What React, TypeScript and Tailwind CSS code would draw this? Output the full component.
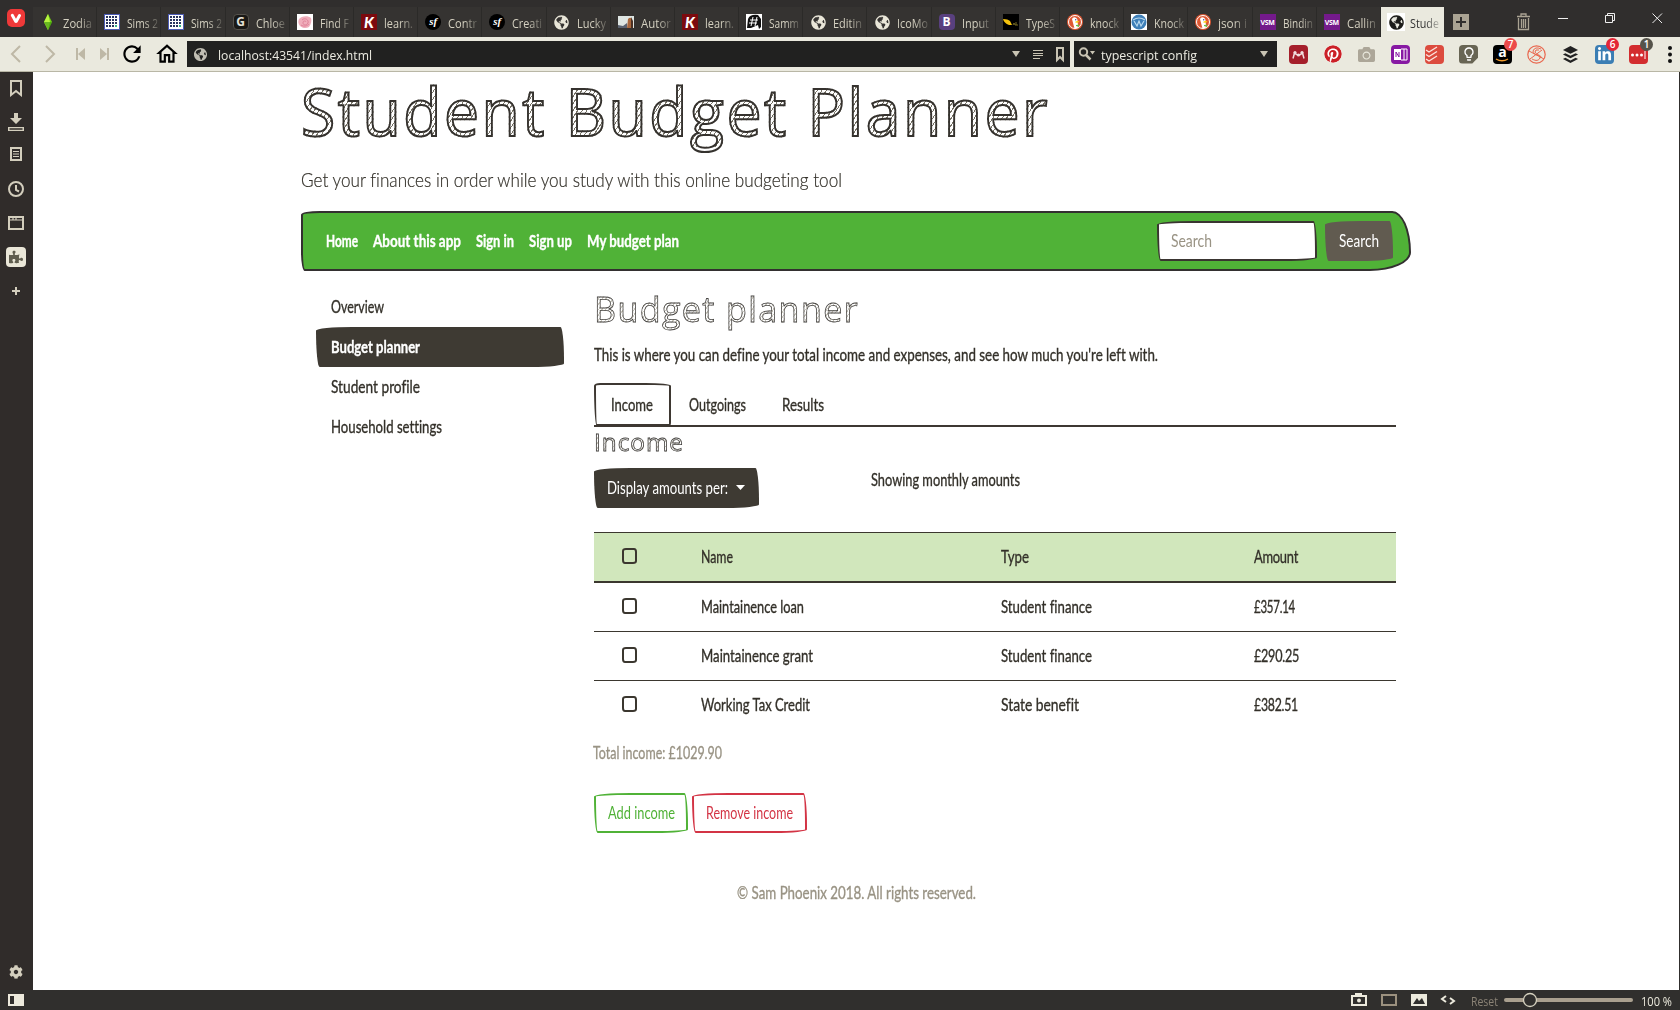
import React, { useLayoutEffect, useRef, useState } from 'react';
import {
  FaPinterest, FaAmazon, FaCamera, FaGlobeAmericas, FaPuzzlePiece, FaLinkedinIn, FaCog,
} from 'react-icons/fa';
import { MdRefresh, MdOutlineHome, MdLightbulbOutline } from 'react-icons/md';
import { SiBuffer } from 'react-icons/si';

/** A single line of text squeezed or stretched to a given width. */
function Fit({ w, className = '', children }: { w: number; className?: string; children: React.ReactNode }) {
  const ref = useRef<HTMLSpanElement>(null);
  const [scale, setScale] = useState(1);
  useLayoutEffect(() => {
    if (ref.current && ref.current.offsetWidth) setScale(w / ref.current.getBoundingClientRect().width);
  }, []);
  return (
    <span className="inline-block shrink-0 whitespace-nowrap text-left" style={{ width: w }}>
      <span ref={ref} className={'inline-block origin-left ' + className} style={{ transform: `scaleX(${scale})` }}>
        {children}
      </span>
    </span>
  );
}

const BODY = 'font-["Lato",sans-serif] text-[17px] leading-[26px] [font-variant-ligatures:none] [-webkit-text-stroke:0.35px_currentColor]';
const THIN = 'font-["Lato",sans-serif] text-[17px] leading-[26px] [font-variant-ligatures:none]';
const SKETCH = 'font-["Open_Sans",sans-serif] font-normal text-transparent bg-clip-text tracking-[0.04em]';
const WOBBLY = 'rounded-[255px_25px_225px_25px/25px_225px_25px_255px]';

function Globe({ dark = false }: { dark?: boolean }) {
  return (
    <span className={'flex size-[15px] items-center justify-center rounded-full ' + (dark ? 'bg-[#e9e9df] text-[#1c1c1a]' : 'text-[#e9e6d8]')}>
      <FaGlobeAmericas size={15} />
    </span>
  );
}

function Favicon({ kind }: { kind: string }) {
  switch (kind) {
    case 'sims':
      return <svg viewBox="0 0 16 16" className="size-4"><path d="M8 0 12 8 8 16 4 8Z" fill="#6fd012" /><path d="M8 0 10 8 8 16 4 8Z" fill="#b9f441" /><path d="M4 8h8L8 16Z" fill="#35900c" opacity=".6" /></svg>;
    case 'grid':
      return (
        <svg viewBox="0 0 16 16" className="size-4" shapeRendering="crispEdges"><path fill="#4d5cb5" d="M0 0h16v16H0z" /><path fill="#fff" d="M1 1h14v14H1z" />
          {[2, 5, 8, 11].map(y => [2, 5, 8, 11].map(x => <rect key={x + '-' + y} x={x} y={y} width="2" height="2" fill={x === 11 && y === 11 ? '#35b98c' : '#28345f'} />))}
        </svg>
      );
    case 'g':
      return <span className="flex size-4 items-center justify-center rounded-sm border border-[#55524c] bg-[#191816] font-['Open_Sans',sans-serif] text-[12px] font-bold leading-none text-[#e5e2d8]">G</span>;
    case 'rose':
      return <svg viewBox="0 0 16 16" className="size-4"><path fill="#fff" d="M0 0h16v16H0z" /><path d="M2 5c2-3 9-4 12-1 1 3 0 6-2 9-3 2-7 1-9-1C1 10 1 7 2 5Z" fill="#f0aebb" /><path d="M5 6c3-3 7 0 6 3-2 3-5 2-5 0 0-3 3-2 3-1M4 11c3 2 6 1 8-1" stroke="#e08299" fill="none" /></svg>;
    case 'k':
      return <span className="flex size-4 items-center justify-center bg-[#7c0a0e] font-['Lato',sans-serif] text-[15px] font-black italic leading-none text-white">K</span>;
    case 'sf':
      return <span className="flex size-4 items-center justify-center rounded-full bg-black pb-0.5 font-['Liberation_Serif',serif] text-[11px] font-bold italic leading-none text-white">sf</span>;
    case 'photo':
      return <svg viewBox="0 0 16 16" className="size-4"><path fill="#dfe6e3" d="M0 2h16v12H0z" /><path fill="#5a6270" d="M0 11l5 1 4-3v5H0z" /><path fill="#a8663c" d="M10 5q3-3 4 1v8h-5z" /><path fill="#493024" d="M13 3l2 4v7h-2z" /></svg>;
    case 'hash':
      return <svg viewBox="0 0 16 16" className="size-4"><path fill="#fff" d="M0 0h16v16H0z" /><path d="M2 5Q4 0 12 1l3 4v8l-2 2-1-4-7 3H1Z" fill="#111" /><path d="M7 3 5 12M11 3 9 12M4 6h8M3 9h8" stroke="#fff" strokeWidth="1" /></svg>;
    case 'b':
      return <span className="flex size-4 items-center justify-center rounded-sm bg-[#59407f] font-['Open_Sans',sans-serif] text-[12px] font-bold leading-none text-white">B</span>;
    case 'bird':
      return <svg viewBox="0 0 16 16" className="size-4"><path fill="#000" d="M0 0h16v16H0z" /><path d="M0 5q5 0 7 2l2 4H6Q1 9 0 5Z" fill="#f4c20d" /><path d="M10 11l1-2 1 2h3M13 8v3" stroke="#776a25" fill="none" /></svg>;
    case 'duck':
      return (
        <svg viewBox="0 0 16 16" className="size-4">
          <circle cx="8" cy="8" r="8" fill="#de5833" /><circle cx="8" cy="8" r="6.500" fill="none" stroke="#fff" strokeWidth="1" />
          <path d="M5 5Q6 2.500 8.500 3.500 11 4.500 10.500 8l1 5.500-4 1Q6 9 5 5Z" fill="#fff" />
          <path d="M8.500 7.500q2-.8 4 0-1 1.300-4 1.200Z" fill="#fdd20a" /><path d="m9 11 3-.500v2.500L9 12Z" fill="#65bc46" /><circle cx="8.700" cy="5.800" r=".7" fill="#2d4f8e" />
        </svg>
      );
    case 'knock':
      return <svg viewBox="0 0 16 16" className="size-4"><path fill="#fff" d="M0 0h16v16H0z" /><circle cx="8" cy="8" r="7.500" fill="#3e7fb8" /><path d="M2 6q6-4 12 0M3 7l3 5 2-5 2 5 3-5" stroke="#b9daf0" strokeWidth="1.200" fill="none" /></svg>;
    case 'vsm':
      return <span className="flex size-4 items-center justify-center bg-[#741a8b] font-['Open_Sans',sans-serif] text-[7px] font-bold leading-none tracking-tighter text-white">VSM</span>;
    default:
      return <Globe />;
  }
}

const TABS: [string, string, number][] = [
  ['sims', 'Zodia', 29], ['grid', 'Sims 2', 31], ['grid', 'Sims 2', 31], ['g', 'Chloe', 29], ['rose', 'Find F', 29], ['k', 'learn.', 29],
  ['sf', 'Contr', 29], ['sf', 'Creati', 30], ['globe', 'Lucky', 29], ['photo', 'Autor', 30], ['k', 'learn.', 29], ['hash', 'Samm', 30],
  ['globe', 'Editin', 29], ['globe', 'IcoMo', 31], ['b', 'Input', 27], ['bird', 'TypeS', 29], ['duck', 'knock', 29], ['knock', 'Knock', 30],
  ['duck', 'json i', 29], ['vsm', 'Bindin', 30], ['vsm', 'Callin', 29],
];

function TabStrip() {
  const fade = ' font-["Open_Sans",sans-serif] text-[12px] leading-[18px] [mask-image:linear-gradient(to_right,black_55%,rgba(0,0,0,0.25))]';
  return (
    <div className="flex h-[37px] bg-[#302e2d]">
      <div className="w-[33px] pl-[7px] pt-[9px]">
        <div className="flex size-[18px] items-center justify-center rounded-[5px] bg-[#ef3939]">
          <svg viewBox="0 0 18 18" className="size-[18px]"><path d="M5.300 6.300 8.600 12.200Q9 12.700 9.400 12.200L12.500 6.500" stroke="#fff" strokeWidth="3" strokeLinecap="round" fill="none" /></svg>
        </div>
      </div>
      <div className="mt-[7px] flex h-[30px] w-[1348px]">
        {TABS.map(([icon, label, w], i) => (
          <div key={i} className="flex min-w-0 flex-1 items-center border-r border-[#2b2a28] bg-[#353331] pl-[7px]">
            <span className="flex w-4 shrink-0 justify-center"><Favicon kind={icon} /></span>
            <span className="ml-[7px] flex"><Fit w={w} className={'text-[#d5d1c1]' + fade}>{label}</Fit></span>
          </div>
        ))}
      </div>
      <div className="mt-[7px] flex h-[30px] w-[63px] items-center bg-[#eae9de] pl-[6px]">
        <span className="flex size-[18px] items-center justify-center bg-white"><Globe dark /></span>
        <span className="ml-[5px] flex"><Fit w={29} className={'text-[#333]' + fade}>Stude</Fit></span>
      </div>
      <svg width="236" height="37" fill="none">
        <path d="M9 14h16v16H9z" fill="#aaa393" /><path d="M17 17v10M12 22h10" stroke="#302e2d" strokeWidth="2" />
        <path d="M73 16.500h13M77 16v-2h5v2M74.500 18v11.500h10V18M77.500 19v9M79.500 19v9M81.500 19v9" stroke="#aaa393" strokeWidth="1.300" />
        <path d="M114 18.500h10" stroke="#eee" />
        <path d="M161.500 15.500h7v7h-7zM163.500 15.500v-2h7v7h-2" stroke="#eee" />
        <path d="m208.500 13.500 9.500 9.500m0-9.500-9.500 9.500" stroke="#eee" />
      </svg>
    </div>
  );
}

function Badge({ className, children }: { className: string; children: string }) {
  return <span className={"absolute -right-[5px] -top-[7px] flex size-[13px] items-center justify-center rounded-full font-['Open_Sans',sans-serif] text-[10px] font-semibold leading-none text-white " + className}>{children}</span>;
}

function Extensions() {
  const box = 'relative flex size-[19px] items-center justify-center rounded-sm ';
  return (
    <div className="flex items-center gap-[15px] pl-[12px]">
      <div className={box + 'bg-[#a51f2b]'}><svg viewBox="0 0 19 19"><path d="M4 13.500 5.500 8Q9.500 12 13.500 8l1.500 5.500" stroke="#f1dede" strokeWidth="1.500" fill="none" /><circle cx="6" cy="7.500" r="1.600" fill="#f1dede" /><circle cx="13" cy="7.500" r="1.600" fill="#f1dede" /><circle cx="9.500" cy="10" r="1.600" fill="#f1dede" /></svg></div>
      <div className={box}><FaPinterest size={18} className="rounded-full bg-white text-[#cb2027]" /></div>
      <div className={box}><FaCamera size={17} className="text-[#aca698]" /></div>
      <div className={box + 'bg-[#8719a3]'}><svg viewBox="0 0 19 19"><path d="M10 4h6v11h-6M13 4v11" stroke="#fff" fill="none" /><path d="M3 4h7v11H3z" fill="#fff" /><path d="M5 12V7l3 5V7" stroke="#8719a3" fill="none" /></svg></div>
      <div className={box + 'bg-[#dc4b3e]'}><svg viewBox="0 0 19 19"><path d="m1 5 3 2 8-5M1 9.500l3 2 8-5M1 14l3 2 8-5" stroke="#fbe4df" strokeWidth="1.400" fill="none" /></svg></div>
      <div className={box + 'bg-[#686554] [clip-path:polygon(0_0,100%_0,100%_70%,70%_100%,0_100%)]'}><MdLightbulbOutline size={16} className="text-white" /></div>
      <div className={box + 'bg-black'}>
        <svg viewBox="0 0 19 19"><path d="M3 14q6 3.500 12 0" stroke="#f19a2a" strokeWidth="1.400" fill="none" /></svg>
        <span className="absolute inset-x-0 top-0 text-center font-['Open_Sans',sans-serif] text-[14px] font-bold leading-[14px] text-white">a</span>
        <Badge className="bg-[#ec4a4a]">7</Badge>
      </div>
      <div className={box}><svg viewBox="0 0 19 19" fill="none" stroke="#e9674e" strokeWidth="1.200"><circle cx="9.500" cy="9.500" r="8.700" /><path d="M14 4Q8 1 6 6c0 5 8 3 7 7-2 4-6 2-8 1M12 5Q8 4 8 7c1 3 7 3 6 6M2 6l15 8M3 14 15 5" strokeWidth="1" /></svg></div>
      <div className={box}><SiBuffer size={17} className="text-[#222]" /></div>
      <div className={box + 'bg-[#3b7eb4]'}><FaLinkedinIn size={15} className="text-white" /><Badge className="bg-[#e32637]">6</Badge></div>
      <div className={box + 'bg-[#d32d2f]'}><svg viewBox="0 0 19 19" fill="#fff"><circle cx="3.500" cy="10" r="1.500" /><circle cx="8" cy="10" r="1.500" /><circle cx="12.500" cy="10" r="1.500" /><path d="M15.500 6h1v8h-1z" /></svg><Badge className="bg-[#55534a]">1</Badge></div>
      <svg width="17" height="19" fill="#111"><circle cx="7" cy="3" r="2" /><circle cx="7" cy="9.500" r="2" /><circle cx="7" cy="16" r="2" /></svg>
    </div>
  );
}

function Toolbar() {
  return (
    <div className="flex h-[35px] items-center border-b border-[#b9b7a6] bg-[#eae9de]">
      <svg width="119" height="34" className="shrink-0" fill="none" stroke="#beb8a6" strokeWidth="2">
        <path d="m20 9-8 8 8 8M46 9l8 8-8 8" />
        <path d="M77 11v12" /><path d="M85 11v12l-7-6z" fill="#beb8a6" stroke="none" />
        <path d="M108 11v12" /><path d="M100 11v12l7-6z" fill="#beb8a6" stroke="none" />
      </svg>
      <div className="flex w-[68px] shrink-0 items-center gap-[9px] text-black"><MdRefresh size={26} /><MdOutlineHome size={26} /></div>
      <div className="flex h-[26px] w-[883px] shrink-0 items-center bg-[#212120] pl-[6px]">
        <span className="scale-90 opacity-80"><Globe /></span>
        <span className="ml-[10px] flex"><Fit w={154} className="font-['Open_Sans',sans-serif] text-[13px] leading-5 text-[#ecebe2]">localhost:43541/index.html</Fit></span>
        <svg width="67" height="26" className="ml-auto" fill="none" stroke="#c9c4b3">
          <path d="M9 10h8l-4 6z" fill="#c9c4b3" stroke="none" />
          <path d="M30 9.500h10M30 12.500h10M30 14.500h10M30 17.500h7" />
          <path d="M54 7h6v12l-3-3-3 3z" strokeWidth="2" />
        </svg>
      </div>
      <div className="ml-1 flex h-[26px] w-[203px] shrink-0 items-center bg-[#212120]">
        <svg width="27" height="26" fill="none"><circle cx="9.500" cy="11" r="3.700" stroke="#c9c4b3" strokeWidth="2" /><path d="m12 14 4.500 4.500" stroke="#c9c4b3" strokeWidth="2.500" /><path d="M16 10h5l-2.500 3.500z" fill="#c9c4b3" /></svg>
        <Fit w={96} className="font-['Open_Sans',sans-serif] text-[13px] leading-5 text-[#ecebe2]">typescript config</Fit>
        <svg width="10" height="8" className="ml-auto mr-2"><path d="M1 1h8L5 7z" fill="#c9c4b3" /></svg>
      </div>
      <Extensions />
    </div>
  );
}

function SidePanel() {
  const slot = 'flex h-[34px] w-full items-center justify-center';
  return (
    <div className="flex w-[33px] shrink-0 flex-col bg-[#302c2a] pr-px text-[#d3cebd]">
      <div className={slot + ' -mt-px'}><svg width="16" height="18" fill="none" stroke="currentColor" strokeWidth="2"><path d="M3 2h10v14l-5-4-5 4z" /></svg></div>
      <div className={slot}><svg width="16" height="20" fill="currentColor"><path d="M6 1h4v5h4l-6 6-6-6h4zM0 15h16v4H0zm1.500 1.300v1.400h13v-1.400z" fillRule="evenodd" /></svg></div>
      <div className={slot + ' pb-1'}><svg width="14" height="16" fill="none" stroke="currentColor"><path d="M2 2h10v12H2z" strokeWidth="2" /><path d="M4 5.500h6M4 8h6M4 10.500h6" /></svg></div>
      <div className={slot + ' pb-0.5'}><svg width="18" height="18" fill="none" stroke="currentColor" strokeWidth="2"><circle cx="9" cy="9" r="7" /><path d="M9 5v5l3 1.500" /></svg></div>
      <div className={slot + ' pb-0.5'}><svg width="16" height="14" fill="none" stroke="currentColor" strokeWidth="2"><path d="M1 1h14v12H1z" /><path d="M1 4h14M5 1v3M8 1v3" strokeWidth="1.200" /></svg></div>
      <div className={slot + ' pb-0.5'}><span className="flex size-5 items-center justify-center rounded-sm bg-[#eae7d8] text-[#5f5d4e]"><FaPuzzlePiece size={14} /></span></div>
      <div className={slot + ' pb-0.5'}><svg width="8" height="8" stroke="currentColor" strokeWidth="2"><path d="M4 0v8M0 4h8" /></svg></div>
      <div className="mt-auto flex h-9 items-center justify-center"><FaCog size={14} /></div>
    </div>
  );
}

function NavBar() {
  const item = BODY + ' font-bold text-white';
  return (
    <nav className="mt-[18px] flex h-[60px] w-[1110px] items-center rounded-[25px_25px_55px_5px/5px_55px_25px_25px] border-2 border-[#333030] bg-[#50b237] pl-[23px]">
      <div className="flex gap-[15px]">
        <Fit w={32} className={item}>Home</Fit>
        <Fit w={88} className={item}>About this app</Fit>
        <Fit w={38} className={item}>Sign in</Fit>
        <Fit w={43} className={item}>Sign up</Fit>
        <Fit w={92} className={item}>My budget plan</Fit>
      </div>
      <div className={'ml-auto flex h-10 w-40 items-center border-2 border-[#3a3531] bg-white pl-3 ' + WOBBLY}>
        <Fit w={41} className={THIN + ' text-[#999384]'}>Search</Fit>
      </div>
      <button className={'ml-2 mr-4 flex h-10 w-[68px] items-center justify-center bg-[#615b50] ' + WOBBLY}>
        <Fit w={40} className={THIN + ' text-white'}>Search</Fit>
      </button>
    </nav>
  );
}

function SideNav() {
  const items: [string, number][] = [['Overview', 53], ['Budget planner', 89], ['Student profile', 89], ['Household settings', 111]];
  return (
    <ul className="ml-[15px] w-[248px] pt-4">
      {items.map(([label, w], i) => (
        <li key={label} className={'flex h-10 items-center pb-px pl-[15px] ' + (i === 1 ? 'bg-[#3e3a33] text-white ' + WOBBLY : 'text-[#333029]')}>
          <Fit w={w} className={BODY + (i === 1 ? ' font-bold' : '')}>{label}</Fit>
        </li>
      ))}
    </ul>
  );
}

type Cells = [string, number, string, number, string, number];

const ROWS: Cells[] = [
  ['Maintainence loan', 103, 'Student finance', 91, '£357.14', 41],
  ['Maintainence grant', 112, 'Student finance', 91, '£290.25', 45],
  ['Working Tax Credit', 109, 'State benefit', 78, '£382.51', 44],
];

function Row({ cells, className }: { cells: Cells; className: string }) {
  return (
    <div className={'grid grid-cols-[107px_300px_253px_142px] items-center ' + className}>
      <div className="pb-0.5 pl-7"><div className="h-4 w-[15px] rounded-[4px_3px_4px_3px/3px_4px_3px_4px] border-2 border-[#3b372f]" /></div>
      <div className="flex pb-px"><Fit w={cells[1]} className={BODY}>{cells[0]}</Fit></div>
      <div className="flex pb-px"><Fit w={cells[3]} className={BODY}>{cells[2]}</Fit></div>
      <div className="flex pb-px"><Fit w={cells[5]} className={BODY + ' tracking-[-0.02em]'}>{cells[4]}</Fit></div>
    </div>
  );
}

function Planner() {
  const hatchSmall = ' bg-[repeating-linear-gradient(125deg,#c9c6bb_0_1px,#fff_1px_3px)] [-webkit-text-stroke:0.8px_#454341]';
  return (
    <section className="ml-[30px] w-[802px] pt-[18px]">
      <h2 className="flex h-10"><Fit w={265} className={SKETCH + hatchSmall + ' text-[35px] leading-10'}>Budget planner</Fit></h2>
      <p className="mt-[13px] flex h-6"><Fit w={564} className={BODY}>This is where you can define your total income and expenses, and see how much you're left with.</Fit></p>
      <div className="mt-[17px] flex h-[44px] border-b-2 border-[#3e3832]">
        <div className="flex h-[43px] w-[77px] items-center justify-center rounded-[55px_225px_15px_25px/25px_25px_35px_355px] border-2 border-[#3e3832] pr-0.5">
          <Fit w={42} className={BODY}>Income</Fit>
        </div>
        <div className="ml-[18px] flex items-center pt-px"><Fit w={57} className={BODY}>Outgoings</Fit></div>
        <div className="ml-[36px] flex items-center pt-px"><Fit w={42} className={BODY}>Results</Fit></div>
      </div>
      <h4 className="-mt-px flex h-[30px]"><Fit w={90} className={SKETCH + hatchSmall + ' text-[24px] leading-[31px]'}>Income</Fit></h4>
      <div className="mt-[11px] flex h-[41px]">
        <button className={'mt-px flex h-10 w-[165px] items-center bg-[#3e3a33] pb-px pl-[13px] text-white ' + WOBBLY}>
          <Fit w={121} className={THIN}>Display amounts per:</Fit>
          <svg width="9" height="5" className="ml-2"><path d="M0 0h9L4.500 5z" fill="#fff" /></svg>
        </button>
        <p className="ml-[111.500px]"><Fit w={149} className={BODY}>Showing monthly amounts</Fit></p>
      </div>
      <div className="mt-6 border-t border-[#3b372f]">
        <Row cells={['Name', 32, 'Type', 28, 'Amount', 44]} className="h-[50px] border-b-2 border-[#3b372f] bg-[#d1e7bc]" />
        {ROWS.map((r, i) => <Row key={i} cells={r} className={i < 2 ? 'h-[49px] border-b border-[#3b372f]' : 'h-12'} />)}
      </div>
      <p className="-ml-px mt-[11px] flex h-6 text-[#999384]"><Fit w={129} className={BODY}>Total income: £1029.90</Fit></p>
      <div className="mt-[29px] flex gap-1">
        <button className={'flex h-10 w-[94px] items-center justify-center border-2 border-[#50b237] pb-px text-[#50b237] ' + WOBBLY}><Fit w={67} className={THIN}>Add income</Fit></button>
        <button className={'flex h-10 w-[115px] items-center justify-center border-2 border-[#d33445] pb-px text-[#d33445] ' + WOBBLY}><Fit w={87} className={THIN}>Remove income</Fit></button>
      </div>
    </section>
  );
}

function StatusBar() {
  return (
    <div className="flex h-5 items-center bg-[#302f2d]">
      <svg width="33" height="20"><path d="M8 4h16v12H8z" fill="#eceadd" /><path d="M10 6h4v8h-4z" fill="#302f2d" /></svg>
      <svg width="126" height="20" className="ml-auto" fill="none">
        <path fillRule="evenodd" d="M6 5h4V3h7v2h5v11H6zM8 7v7h12V7z" fill="#eceadd" /><circle cx="14" cy="10.500" r="2" fill="#eceadd" />
        <path d="M37 5h14v10H37z" stroke="#9b917f" strokeWidth="2" />
        <path d="M66 4h16v12H66z" fill="#eceadd" /><path d="m68 14 4-6 2 3 3-3 3 6z" fill="#302f2d" />
        <path d="m101 6-4 3 4 3M105 8l4 3-4 3" stroke="#eceadd" strokeWidth="2" />
      </svg>
      <span className="flex"><Fit w={27} className="font-['Open_Sans',sans-serif] text-[12px] leading-[18px] text-[#8b8376]">Reset</Fit></span>
      <svg width="143" height="20" fill="none"><path d="M8 10h125" stroke="#aaa08f" strokeWidth="4" strokeLinecap="round" /><circle cx="32" cy="10" r="6.500" fill="#302f2d" stroke="#d6d2bf" strokeWidth="1.300" /></svg>
      <span className="mr-2 flex"><Fit w={31} className="font-['Open_Sans',sans-serif] text-[12px] leading-[18px] text-[#eceadd]">100 %</Fit></span>
    </div>
  );
}

export default function App() {
  return (
    <div className="flex h-[1010px] w-[1680px] flex-col overflow-hidden bg-[#302e2d]">
      <TabStrip />
      <Toolbar />
      <div className="flex min-h-0 flex-1">
        <SidePanel />
        <main className="mr-px flex-1 bg-white pl-[268px] pt-[2px] text-[#333029]">
          <h1 className="flex h-[72px]">
            <Fit w={749} className={SKETCH + ' text-[66px] leading-[73px] bg-[repeating-linear-gradient(125deg,#777367_0_1px,#fff_1px_4px)] [-webkit-text-stroke:2px_#35322e]'}>Student Budget Planner</Fit>
          </h1>
          <p className="mt-[19px] flex h-7"><Fit w={541} className='font-["Lato",sans-serif] text-[19px] font-light leading-[29px] [font-variant-ligatures:none] [-webkit-text-stroke:0.2px_currentColor]'>Get your finances in order while you study with this online budgeting tool</Fit></p>
          <NavBar />
          <div className="flex">
            <SideNav />
            <Planner />
          </div>
          <footer className="mt-[47px] flex w-[1110px] justify-center text-[#999384]"><Fit w={239} className={BODY}>© Sam Phoenix 2018. All rights reserved.</Fit></footer>
        </main>
      </div>
      <StatusBar />
    </div>
  );
}
